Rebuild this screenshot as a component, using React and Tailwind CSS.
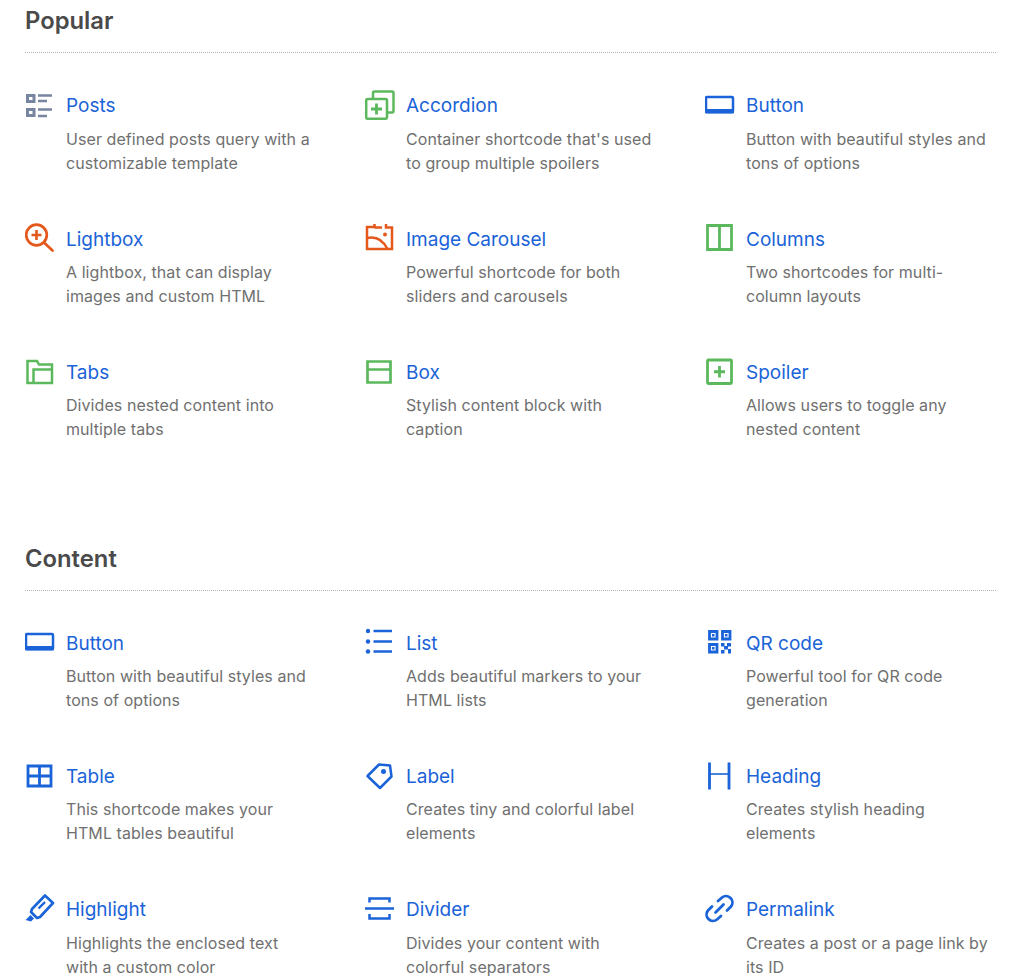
import React from "react";

const GREEN = "text-[#5cb85c]";
const ORANGE = "text-[#e4581c]";
const BLUE = "text-[#1a63d8]";
const SLATE = "text-[#7885a0]";

// all icons are drawn on a 30x30 box
const icons = {
  posts: (
    <>
      <path d="M2.500 5.500h6.500v6H2.500zM2.500 19.500h6.500v6H2.500z" fill="none" stroke="currentColor" strokeWidth="3" />
      <path d="M13 5.500h14M13 11h9M13 19.500h14M13 26h9" stroke="currentColor" strokeWidth="2.400" />
    </>
  ),
  accordion: (
    <>
      <rect x="1.200" y="9" width="20.800" height="19.800" rx="1.500" fill="none" stroke="currentColor" strokeWidth="2.500" />
      <path d="M8 9V3a1.500 1.500 0 0 1 1.500-1.500H27A1.500 1.500 0 0 1 28.500 3v18a1.500 1.500 0 0 1-1.500 1.500h-5" fill="none" stroke="currentColor" strokeWidth="2.500" />
      <path d="M11.500 13.500v11M6 19h11" stroke="currentColor" strokeWidth="2.800" />
    </>
  ),
  button: (
    <>
      <rect x="1" y="7" width="27" height="15" rx="1" fill="none" stroke="currentColor" strokeWidth="2.500" />
      <path d="M0 19h29v3.500a1 1 0 0 1-1 1H1a1 1 0 0 1-1-1z" fill="currentColor" />
    </>
  ),
  lightbox: (
    <>
      <circle cx="11.500" cy="12" r="10.300" fill="none" stroke="currentColor" strokeWidth="2.700" />
      <path d="M19.500 20l8 7.500" stroke="currentColor" strokeWidth="2.700" strokeLinecap="round" />
      <path d="M11.500 7v10M6.500 12h10" stroke="currentColor" strokeWidth="2.600" />
    </>
  ),
  carousel: (
    <>
      <path d="M9.500 1v4M9.500 4.500H17M21 1v3.500h6V26H2V4h7.500" fill="none" stroke="currentColor" strokeWidth="2.500" />
      <path d="M2 15c9-2 16 2 20.500 11" fill="none" stroke="currentColor" strokeWidth="2.500" />
      <circle cx="20" cy="11.500" r="2" fill="currentColor" />
    </>
  ),
  columns: (
    <path d="M2.500 2.500h24v24h-24zM14.500 2.500v24" fill="none" stroke="currentColor" strokeWidth="2.800" />
  ),
  tabs: (
    <path d="M2.500 4H12l2 3.500h13V26H2.500zM8.500 26V12.500H27" fill="none" stroke="currentColor" strokeWidth="2.500" />
  ),
  box: (
    <path d="M2.500 4.500h23v21h-23zM2.500 12.500h23" fill="none" stroke="currentColor" strokeWidth="2.700" />
  ),
  spoiler: (
    <>
      <rect x="2.500" y="3" width="24" height="23.500" rx="1" fill="none" stroke="currentColor" strokeWidth="2.800" />
      <path d="M14.500 9v11.500M9 14.750h11" stroke="currentColor" strokeWidth="2.800" />
    </>
  ),
  list: (
    <>
      <circle cx="3" cy="4" r="2.200" fill="currentColor" />
      <circle cx="3" cy="14.500" r="2.200" fill="currentColor" />
      <circle cx="3" cy="24.500" r="2.200" fill="currentColor" />
      <path d="M8.500 4h18.500M8.500 14.500h18.500M8.500 24.500h18.500" stroke="currentColor" strokeWidth="2.600" />
    </>
  ),
  qr: (
    <>
      <path d="M4.500 4.500h7.500v7.500H4.500zM17.500 4.500h7.500v7.500h-7.500zM4.500 17.500h7.500v7.500H4.500z" fill="none" stroke="currentColor" strokeWidth="2.800" />
      <path d="M7 7h2.500v2.500H7zM20 7h2.500v2.500H20zM7 20h2.500v2.500H7z" fill="currentColor" />
      <path d="M16 16h3.500v3.500H16zM22 16h4v3.500h-4zM19 19h4v3.500h-4zM16 23h3.500v3.500H16zM23 22h3v4.500h-3z" fill="currentColor" />
    </>
  ),
  table: (
    <path d="M3 5h23v20H3zM3 15h23M14.500 5v20" fill="none" stroke="currentColor" strokeWidth="2.800" />
  ),
  label: (
    <>
      <path d="M2.500 15L14 3.500l11 1 1.500 11L15 27z" fill="none" stroke="currentColor" strokeWidth="2.500" strokeLinejoin="round" />
      <circle cx="18.500" cy="10.500" r="2.500" fill="currentColor" />
    </>
  ),
  heading: (
    <>
      <path d="M4.500 1.500v27M24 1.500v27" fill="none" stroke="currentColor" strokeWidth="2.800" />
      <path d="M4.500 13h19.500" stroke="currentColor" strokeWidth="1.600" />
    </>
  ),
  highlight: (
    <>
      <path d="M20 1.500l8 7.500L15 23l-3 1-6-6 1-3z" fill="none" stroke="currentColor" strokeWidth="2.600" strokeLinejoin="round" />
      <path d="M13.500 14.500L20 8" stroke="currentColor" strokeWidth="2.400" />
      <path d="M0.500 26l5-5 3.500 3.500-3 3z" fill="currentColor" />
    </>
  ),
  divider: (
    <path d="M0 14.500h29M4.500 8.500V4.500h20v4M4.500 20v4.500h20V20" fill="none" stroke="currentColor" strokeWidth="2.500" />
  ),
  permalink: (
    <path d="M10.500 18.500l8-8M13 7l4-3.500a6.400 6.400 0 0 1 9 9L22 16.500M16 22l-4 3.500a6.400 6.400 0 0 1-9-9L7 12.500" fill="none" stroke="currentColor" strokeWidth="2.800" strokeLinecap="round" />
  ),
};

const popular = [
  { icon: "posts", color: SLATE, title: "Posts", text: "User defined posts query with a customizable template" },
  { icon: "accordion", color: GREEN, title: "Accordion", text: "Container shortcode that's used to group multiple spoilers" },
  { icon: "button", color: BLUE, title: "Button", text: "Button with beautiful styles and tons of options" },
  { icon: "lightbox", color: ORANGE, title: "Lightbox", text: "A lightbox, that can display images and custom HTML" },
  { icon: "carousel", color: ORANGE, title: "Image Carousel", text: "Powerful shortcode for both sliders and carousels" },
  { icon: "columns", color: GREEN, title: "Columns", text: "Two shortcodes for multi-column layouts" },
  { icon: "tabs", color: GREEN, title: "Tabs", text: "Divides nested content into multiple tabs" },
  { icon: "box", color: GREEN, title: "Box", text: "Stylish content block with caption" },
  { icon: "spoiler", color: GREEN, title: "Spoiler", text: "Allows users to toggle any nested content" },
];

const content = [
  { icon: "button", color: BLUE, title: "Button", text: "Button with beautiful styles and tons of options" },
  { icon: "list", color: BLUE, title: "List", text: "Adds beautiful markers to your HTML lists" },
  { icon: "qr", color: BLUE, title: "QR code", text: "Powerful tool for QR code generation" },
  { icon: "table", color: BLUE, title: "Table", text: "This shortcode makes your HTML tables beautiful" },
  { icon: "label", color: BLUE, title: "Label", text: "Creates tiny and colorful label elements" },
  { icon: "heading", color: BLUE, title: "Heading", text: "Creates stylish heading elements" },
  { icon: "highlight", color: BLUE, title: "Highlight", text: "Highlights the enclosed text with a custom color" },
  { icon: "divider", color: BLUE, title: "Divider", text: "Divides your content with colorful separators" },
  { icon: "permalink", color: BLUE, title: "Permalink", text: "Creates a post or a page link by its ID" },
];

function Item({ icon, color, title, text }) {
  return (
    <div className="flex gap-[11px]">
      <svg viewBox="0 0 30 30" className={`w-[30px] h-[30px] shrink-0 -mt-[2px] ${color}`}>
        {icons[icon]}
      </svg>
      <div className="min-w-0 max-w-[247px]">
        <a className="block pt-[0.45px] text-[19px] leading-7 text-[#1a63d8]">{title}</a>
        <p className="mt-[6.15px] text-[16px] leading-6 tracking-[0.07px] text-[#707070]">{text}</p>
      </div>
    </div>
  );
}

function Section({ title, items }) {
  return (
    <section>
      <h2 className="pt-[0.3px] pb-[15px] border-b border-dotted border-[#b5b5b5] text-[23.8px] leading-8 font-semibold text-[#4a4a4a]">{title}</h2>
      <div className="grid grid-cols-3 gap-x-[49px] gap-y-[50.8px] mt-[38.7px]">
        {items.map((item) => (
          <Item key={item.title} {...item} />
        ))}
      </div>
    </section>
  );
}

export default function App() {
  return (
    <div className="h-[978px] overflow-hidden bg-white pl-[25px] pr-[27px] pt-[5px] font-['Inter','Liberation_Sans',sans-serif]">
      <div className="flex flex-col gap-[101px]">
        <Section title="Popular" items={popular} />
        <Section title="Content" items={content} />
      </div>
    </div>
  );
}
